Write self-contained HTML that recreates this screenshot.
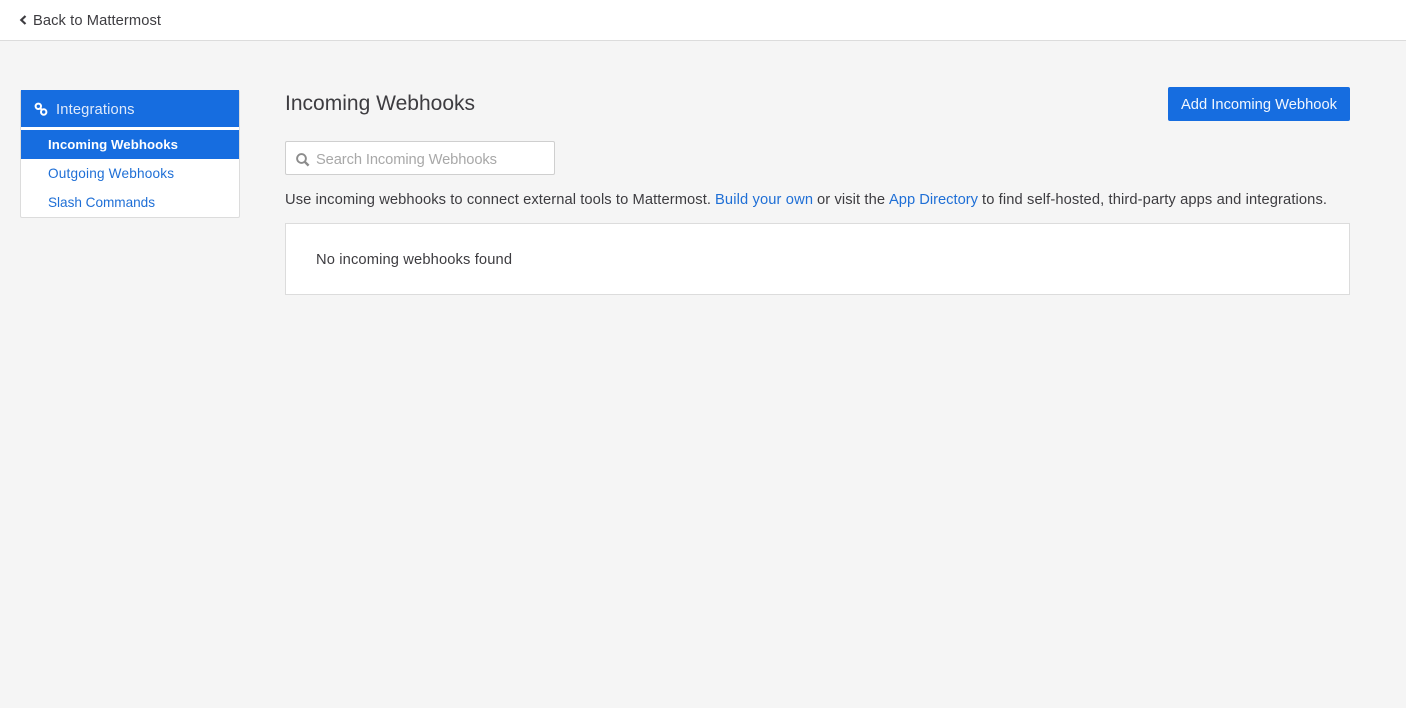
<!DOCTYPE html>
<html lang="en">
<head>
<meta charset="utf-8">
<title>Incoming Webhooks</title>
<style>
html,body{margin:0;padding:0;width:1406px;height:708px;overflow:hidden;background:#f5f5f5}
.b{position:absolute;box-sizing:border-box}
svg{position:absolute;left:0;top:0}
text{font-family:"Liberation Sans",Arial,sans-serif;font-size:14.7px;fill:#3d3c40}
.l{fill:#1f6fd6}
.s{font-size:13.6px}
</style>
</head>
<body>
<div class="b" style="left:0;top:0;width:1406px;height:41px;background:#fff;border-bottom:1px solid #dcdcdc"></div>
<div class="b" style="left:20px;top:90px;width:220px;height:128px;background:#fff;border:1px solid #dcdcdc;border-radius:2px"></div>
<div class="b" style="left:21px;top:90px;width:218px;height:37px;background:#166de0"></div>
<div class="b" style="left:21px;top:130px;width:218px;height:29px;background:#166de0"></div>
<div class="b" style="left:1168px;top:87px;width:182px;height:34px;background:#166de0;border-radius:2px"></div>
<div class="b" style="left:285px;top:141px;width:270px;height:34px;background:#fff;border:1px solid #cfcfcf;border-radius:2px"></div>
<div class="b" style="left:285px;top:223px;width:1065px;height:72px;background:#fff;border:1px solid #dcdcdc"></div>
<svg width="1406" height="708" viewBox="0 0 1406 708">
<path d="M25.5 16L21.3 20L25.5 24" fill="none" stroke="#3d3c40" stroke-width="2.2"/>
<text x="33" y="25" textLength="128">Back to Mattermost</text>
<g fill="none" stroke="#fff" stroke-width="2">
<circle cx="38.3" cy="106.3" r="2.7"/><circle cx="43.7" cy="112" r="2.7"/>
<path d="M40 108L42 110"/>
</g>
<text x="56" y="114" textLength="78.5" style="fill:#dfeafb">Integrations</text>
<text x="48" y="149" textLength="130" style="fill:#fff;font-weight:bold;font-size:13.2px">Incoming Webhooks</text>
<text x="48" y="178" textLength="126" class="l s">Outgoing Webhooks</text>
<text x="48" y="207" textLength="107" class="l s">Slash Commands</text>
<text x="285" y="110" textLength="190" style="font-size:21px">Incoming Webhooks</text>
<text x="1181" y="109" textLength="156" style="fill:#f2f7fe">Add Incoming Webhook</text>
<g fill="none" stroke="#8c8c8c">
<circle cx="301.5" cy="158.5" r="4.4" stroke-width="1.9"/>
<path d="M304.8 161.8L308.6 165.6" stroke-width="2.4"/>
</g>
<text x="316" y="164" textLength="181" style="fill:#a8a8a8">Search Incoming Webhooks</text>
<text x="285" y="204" textLength="426">Use incoming webhooks to connect external tools to Mattermost.</text>
<text x="715" y="204" textLength="98" class="l">Build your own</text>
<text x="817" y="204" textLength="68">or visit the</text>
<text x="889" y="204" textLength="89" class="l">App Directory</text>
<text x="982" y="204" textLength="345">to find self-hosted, third-party apps and integrations.</text>
<text x="316" y="264" textLength="196">No incoming webhooks found</text>
</svg>
</body>
</html>
